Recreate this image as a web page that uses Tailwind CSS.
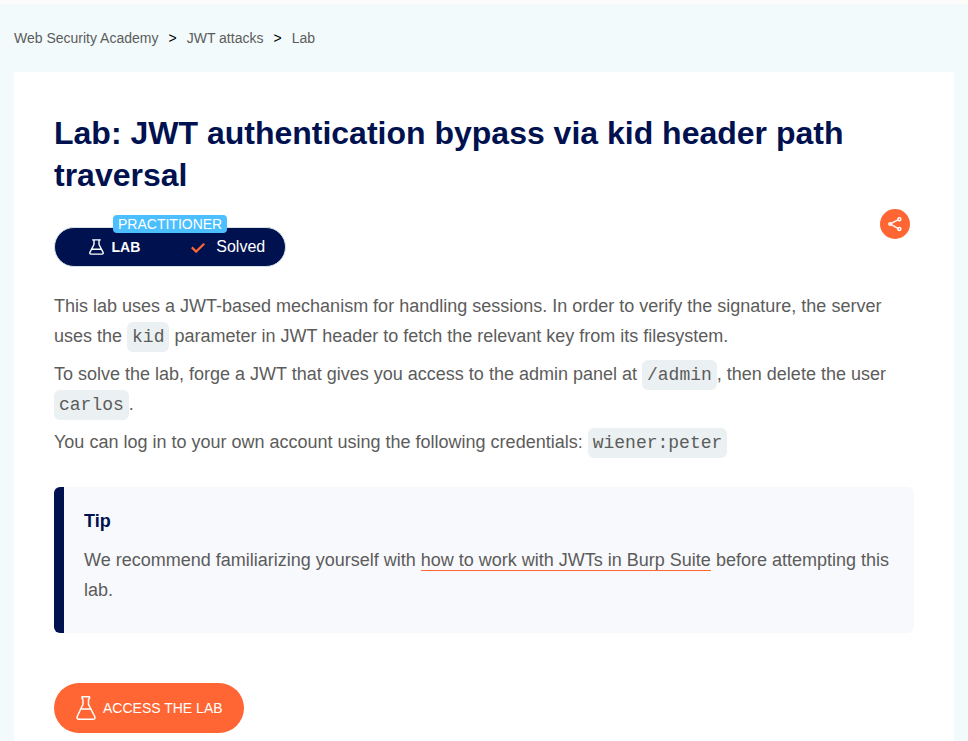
<!DOCTYPE html>
<html lang="en"><head><meta charset="utf-8"><title>Lab: JWT authentication bypass via kid header path traversal</title>
<script src="https://cdn.jsdelivr.net/npm/@tailwindcss/browser@4"></script></head>
<body class="bg-[#f2fafc] h-[741px] overflow-hidden font-['Liberation_Sans',Arial,sans-serif] text-[#5c5c5b]">
<div class="h-1 bg-[#fcfcfa]"></div>
<nav class="flex items-center gap-[10px] h-[68px] px-[14px] text-sm"><span>Web Security Academy</span><span class="text-black">&gt;</span><span>JWT attacks</span><span class="text-black">&gt;</span><span>Lab</span></nav>
<main class="mx-[14px] bg-white px-10 pt-10 h-[700px]">
  <h1 class="text-[32px] leading-[42px] font-bold text-[#00114f]">Lab: JWT authentication bypass via kid header path traversal</h1>
  <div class="flex justify-between pt-[13px] pr-1">
    <div class="relative mt-[18px] flex items-center w-[232px] h-10 rounded-full bg-[#00114f] border border-[#d5e2e6] text-white">
      <span class="absolute left-[58px] -top-[13px] h-[18px] px-[5px] rounded-[4px] bg-[#4bbfff] text-sm leading-[18px]">PRACTITIONER</span>
      <svg class="ml-[34px] w-[15px] h-4" viewBox="0 0 15 16" fill="none" stroke="white" stroke-width="1.4" stroke-linejoin="round" stroke-linecap="round"><path d="M3.700 .9h7.600M5 1v4.500L.9 13.400Q.4 15.100 2 15.100h11q1.600 0 1.100-1.700L10 5.500V1M3.200 10.300h8.600"/></svg>
      <b class="ml-[7.500px] text-sm">LAB</b>
      <svg class="ml-[51px] mt-[2px] w-[14px] h-[10px]" viewBox="0 0 14 10" fill="none" stroke="#ff6633" stroke-width="2.2"><path d="M.8 4.400l4.300 4.200L13.200.8"/></svg>
      <span class="ml-[11px] text-base">Solved</span>
    </div>
    <div class="w-[30px] h-[30px] rounded-full bg-[#ff6633]">
      <svg class="w-[30px] h-[30px]" viewBox="0 0 30 30" fill="none" stroke="white" stroke-width="1.500"><path d="M11.300 14.300L17.900 10.900M11.300 15.700L17.900 19.300"/><circle cx="10.200" cy="15" r="1.300"/><circle cx="19.300" cy="10.200" r="1.500"/><circle cx="19.300" cy="20" r="1.500"/></svg>
    </div>
  </div>
  <div class="pt-6 text-lg leading-[30px] space-y-2">
    <p>This lab uses a JWT-based mechanism for handling sessions. In order to verify the signature, the server uses the <code class="font-['Liberation_Mono',monospace] leading-none bg-[#ebf0f2] rounded-md p-[5px]">kid</code> parameter in JWT header to fetch the relevant key from its filesystem.</p>
    <p>To solve the lab, forge a JWT that gives you access to the admin panel at <code class="font-['Liberation_Mono',monospace] leading-none bg-[#ebf0f2] rounded-md p-[5px]">/admin</code>, then delete the user <code class="font-['Liberation_Mono',monospace] leading-none bg-[#ebf0f2] rounded-md p-[5px]">carlos</code>.</p>
    <p>You can log in to your own account using the following credentials: <code class="font-['Liberation_Mono',monospace] leading-none bg-[#ebf0f2] rounded-md p-[5px]">wiener:peter</code></p>
  </div>
  <section class="mt-[30px] h-[146px] rounded-md border-l-[10px] border-[#00114f] bg-[#f8f9fd] pl-5 pr-5 pt-[19px] text-lg leading-[30px]">
    <h2 class="font-bold text-[#00114f]">Tip</h2>
    <p class="mt-[9px]">We recommend familiarizing yourself with <a class="border-b border-[#ff6633]">how to work with JWTs in Burp Suite</a> before attempting this lab.</p>
  </section>
  <a class="mt-[50px] flex items-center w-[190px] h-[50px] rounded-full bg-[#ff6633] text-white text-sm">
    <svg class="ml-[22px] w-5 h-6" viewBox="0 0 20 24" fill="none" stroke="white" stroke-width="1.500" stroke-linejoin="round" stroke-linecap="round"><path d="M6 .8h7.500v1.700l-1 .8v5L18.700 20.500Q19.600 23.200 17 23.200H3Q.4 23.200 1.200 20.500L7 8.300v-5L6 2.500ZM5 12.900h9.600"/></svg>
    <span class="ml-[7px]">ACCESS THE LAB</span>
  </a>
</main></body></html>
